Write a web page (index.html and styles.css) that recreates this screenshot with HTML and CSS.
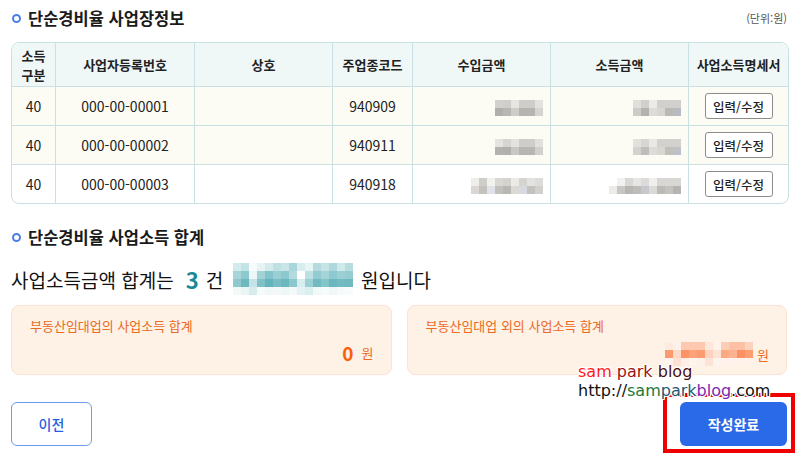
FILE: index.html
```html
<!DOCTYPE html>
<html lang="ko">
  <head>
    <meta charset="utf-8" />
    <title>단순경비율 사업장정보</title>
    <link rel="stylesheet" href="styles.css">
  </head>
  <body>
    <div class="page">
      <div class="section-head">
        <h2 class="section-title"><span class="dot"></span>단순경비율 사업장정보</h2>
        <span class="unit">(단위:원)</span>
      </div>

      <table class="biz-table">
        <colgroup>
          <col style="width:44px">
          <col style="width:139px">
          <col style="width:138px">
          <col style="width:80px">
          <col style="width:138px">
          <col style="width:138px">
          <col style="width:99px">
        </colgroup>
        <thead>
          <tr>
            <th>소득<br>구분</th>
            <th>사업자등록번호</th>
            <th>상호</th>
            <th>주업종코드</th>
            <th>수입금액</th>
            <th>소득금액</th>
            <th>사업소득명세서</th>
          </tr>
        </thead>
        <tbody>
          <tr class="cream">
            <td>40</td>
            <td>000-00-00001</td>
            <td></td>
            <td>940909</td>
            <td class="amount">
              <svg class="mosaic" width="48" height="16">
                <rect x="0" y="0" width="8" height="8" fill="#d3d1ce"/><rect x="8" y="0" width="8" height="8" fill="#d0cecb"/><rect x="16" y="0" width="8" height="8" fill="#e6e5e0"/><rect x="24" y="0" width="16" height="8" fill="#cfcdca"/><rect x="40" y="0" width="8" height="8" fill="#e3e2de"/>
                <rect x="0" y="8" width="8" height="8" fill="#b1afab"/><rect x="8" y="8" width="8" height="8" fill="#b8b7b4"/><rect x="16" y="8" width="8" height="8" fill="#cfcdc8"/><rect x="24" y="8" width="16" height="8" fill="#b6b4b0"/><rect x="40" y="8" width="8" height="8" fill="#d6d4d0"/>
              </svg>
            </td>
            <td class="amount">
              <svg class="mosaic" width="48" height="16">
                <rect x="0" y="0" width="8" height="8" fill="#e1dfdc"/><rect x="8" y="0" width="8" height="8" fill="#d2d0cd"/><rect x="16" y="0" width="8" height="8" fill="#ecebe7"/><rect x="24" y="0" width="24" height="8" fill="#d2d0cd"/>
                <rect x="0" y="8" width="8" height="8" fill="#cfccc8"/><rect x="8" y="8" width="8" height="8" fill="#b4b2ae"/><rect x="16" y="8" width="8" height="8" fill="#dcdcd9"/><rect x="24" y="8" width="8" height="8" fill="#d9d6d2"/><rect x="32" y="8" width="8" height="8" fill="#bcb9b4"/><rect x="40" y="8" width="8" height="8" fill="#b9bbc2"/>
              </svg>
            </td>
            <td><button type="button" class="edit-btn">입력/수정</button></td>
          </tr>
          <tr class="cream">
            <td>40</td>
            <td>000-00-00002</td>
            <td></td>
            <td>940911</td>
            <td class="amount">
              <svg class="mosaic" width="48" height="16">
                <rect x="0" y="0" width="8" height="8" fill="#e5e4e0"/><rect x="8" y="0" width="8" height="8" fill="#d7d5d2"/><rect x="16" y="0" width="8" height="8" fill="#e3e2de"/><rect x="24" y="0" width="16" height="8" fill="#cfcdca"/><rect x="40" y="0" width="8" height="8" fill="#e1e0dc"/>
                <rect x="0" y="8" width="8" height="8" fill="#b5b3af"/><rect x="8" y="8" width="8" height="8" fill="#b2b0ad"/><rect x="16" y="8" width="8" height="8" fill="#c9c7c3"/><rect x="24" y="8" width="16" height="8" fill="#b8b6b2"/><rect x="40" y="8" width="8" height="8" fill="#d2d0cc"/>
              </svg>
            </td>
            <td class="amount">
              <svg class="mosaic" width="48" height="16">
                <rect x="0" y="0" width="8" height="8" fill="#e3e1de"/><rect x="8" y="0" width="8" height="8" fill="#d9d6d2"/><rect x="16" y="0" width="8" height="8" fill="#e9e8e4"/><rect x="24" y="0" width="24" height="8" fill="#d3d1ce"/>
                <rect x="0" y="8" width="8" height="8" fill="#d5d2ce"/><rect x="8" y="8" width="8" height="8" fill="#c0beba"/><rect x="16" y="8" width="8" height="8" fill="#dedcd8"/><rect x="24" y="8" width="8" height="8" fill="#dad7d3"/><rect x="32" y="8" width="8" height="8" fill="#c1bfba"/><rect x="40" y="8" width="8" height="8" fill="#bfc1c8"/>
              </svg>
            </td>
            <td><button type="button" class="edit-btn">입력/수정</button></td>
          </tr>
          <tr>
            <td>40</td>
            <td>000-00-00003</td>
            <td></td>
            <td>940918</td>
            <td class="amount">
              <svg class="mosaic" width="72" height="16">
                <rect x="0" y="0" width="8" height="8" fill="#eeedea"/><rect x="8" y="0" width="8" height="8" fill="#cfcdca"/><rect x="16" y="0" width="8" height="8" fill="#f1f1ee"/><rect x="24" y="0" width="8" height="8" fill="#d9d7d4"/><rect x="32" y="0" width="8" height="8" fill="#d4d2cf"/><rect x="40" y="0" width="8" height="8" fill="#eceae7"/><rect x="48" y="0" width="8" height="8" fill="#d5d4d1"/><rect x="56" y="0" width="8" height="8" fill="#e3e3e2"/><rect x="64" y="0" width="8" height="8" fill="#dedcd9"/>
                <rect x="0" y="8" width="8" height="8" fill="#dad7d3"/><rect x="8" y="8" width="8" height="8" fill="#c4c2be"/><rect x="16" y="8" width="8" height="8" fill="#dfe3e8"/><rect x="24" y="8" width="8" height="8" fill="#c3c1bd"/><rect x="32" y="8" width="8" height="8" fill="#b9b7b3"/><rect x="40" y="8" width="8" height="8" fill="#dcd9d5"/><rect x="48" y="8" width="8" height="8" fill="#d6d9df"/><rect x="56" y="8" width="8" height="8" fill="#c3c2c0"/><rect x="64" y="8" width="8" height="8" fill="#d2d0cd"/>
              </svg>
            </td>
            <td class="amount">
              <svg class="mosaic" width="72" height="16">
                <rect x="0" y="0" width="8" height="8" fill="#ffffff"/><rect x="8" y="0" width="8" height="8" fill="#f2f1ef"/><rect x="16" y="0" width="8" height="8" fill="#dad8d5"/><rect x="24" y="0" width="8" height="8" fill="#e6e6e4"/><rect x="32" y="0" width="8" height="8" fill="#dcdbd9"/><rect x="40" y="0" width="8" height="8" fill="#f0efed"/><rect x="48" y="0" width="24" height="8" fill="#d9d7d4"/>
                <rect x="0" y="8" width="8" height="8" fill="#ecebe8"/><rect x="8" y="8" width="8" height="8" fill="#c9c7c4"/><rect x="16" y="8" width="8" height="8" fill="#b8b6b3"/><rect x="24" y="8" width="8" height="8" fill="#bebdbc"/><rect x="32" y="8" width="8" height="8" fill="#c6c8ce"/><rect x="40" y="8" width="8" height="8" fill="#dcdad7"/><rect x="48" y="8" width="8" height="8" fill="#bcbab6"/><rect x="56" y="8" width="8" height="8" fill="#c4c2be"/><rect x="64" y="8" width="8" height="8" fill="#b5b4b2"/>
              </svg>
            </td>
            <td><button type="button" class="edit-btn">입력/수정</button></td>
          </tr>
        </tbody>
      </table>

      <div class="section-head second">
        <h2 class="section-title"><span class="dot"></span>단순경비율 사업소득 합계</h2>
      </div>

      <p class="total-line">
        사업소득금액 합계는
        <strong class="count">3</strong>
        <span class="unit-word">건</span>
        <svg class="mosaic total-blur" width="120" height="32">
          <rect x="0" y="0" width="8" height="8" fill="#d2ebed"/><rect x="8" y="0" width="8" height="8" fill="#c3e3e6"/><rect x="16" y="0" width="8" height="8" fill="#f7fbfb"/><rect x="24" y="0" width="8" height="8" fill="#e6f3f4"/><rect x="32" y="0" width="8" height="8" fill="#d4ebed"/><rect x="40" y="0" width="8" height="8" fill="#bfe0e3"/><rect x="48" y="0" width="8" height="8" fill="#c8e5e7"/><rect x="56" y="0" width="8" height="8" fill="#a9d6da"/><rect x="64" y="0" width="8" height="8" fill="#d7edee"/><rect x="72" y="0" width="8" height="8" fill="#e8f5f5"/><rect x="80" y="0" width="8" height="8" fill="#b5dbde"/><rect x="88" y="0" width="8" height="8" fill="#c6e4e6"/><rect x="96" y="0" width="8" height="8" fill="#aed8dc"/><rect x="104" y="0" width="8" height="8" fill="#d0e9eb"/><rect x="112" y="0" width="8" height="8" fill="#b8dde0"/>
          <rect x="0" y="8" width="8" height="8" fill="#a9d5d9"/><rect x="8" y="8" width="8" height="8" fill="#8ccacf"/><rect x="16" y="8" width="8" height="8" fill="#eef7f7"/><rect x="24" y="8" width="8" height="8" fill="#a2d2d6"/><rect x="32" y="8" width="8" height="8" fill="#83c4ca"/><rect x="40" y="8" width="8" height="8" fill="#9acfd3"/><rect x="48" y="8" width="8" height="8" fill="#8cc9ce"/><rect x="56" y="8" width="8" height="8" fill="#b4dadd"/><rect x="64" y="8" width="8" height="8" fill="#ffffff"/><rect x="72" y="8" width="8" height="8" fill="#bde0e3"/><rect x="80" y="8" width="8" height="8" fill="#92cbd0"/><rect x="88" y="8" width="8" height="8" fill="#a5d3d7"/><rect x="96" y="8" width="8" height="8" fill="#8ec9cf"/><rect x="104" y="8" width="8" height="8" fill="#9ccfd4"/><rect x="112" y="8" width="8" height="8" fill="#96cdd2"/>
          <rect x="0" y="16" width="8" height="8" fill="#8fc9ce"/><rect x="8" y="16" width="8" height="8" fill="#6db9c0"/><rect x="16" y="16" width="8" height="8" fill="#c6e4e7"/><rect x="24" y="16" width="8" height="8" fill="#7fc1c7"/><rect x="32" y="16" width="8" height="8" fill="#64b4bb"/><rect x="40" y="16" width="8" height="8" fill="#78bec4"/><rect x="48" y="16" width="8" height="8" fill="#6bb8bf"/><rect x="56" y="16" width="8" height="8" fill="#8ac8cd"/><rect x="64" y="16" width="8" height="8" fill="#d8eded"/><rect x="72" y="16" width="8" height="8" fill="#9bd0d4"/><rect x="80" y="16" width="8" height="8" fill="#70bac1"/><rect x="88" y="16" width="8" height="8" fill="#84c5ca"/><rect x="96" y="16" width="8" height="8" fill="#6ab7be"/><rect x="104" y="16" width="8" height="8" fill="#73bbc2"/><rect x="112" y="16" width="8" height="8" fill="#6fb9c0"/>
          <rect x="0" y="24" width="8" height="8" fill="#f1f9f9"/><rect x="8" y="24" width="8" height="8" fill="#eaf5f6"/><rect x="16" y="24" width="8" height="8" fill="#d8eced"/><rect x="24" y="24" width="8" height="8" fill="#f5fafa"/><rect x="32" y="24" width="8" height="8" fill="#f0f8f8"/><rect x="40" y="24" width="8" height="8" fill="#f3f9f9"/><rect x="48" y="24" width="8" height="8" fill="#eef7f7"/><rect x="56" y="24" width="8" height="8" fill="#f4fafa"/><rect x="64" y="24" width="8" height="8" fill="#e4f2f3"/><rect x="72" y="24" width="8" height="8" fill="#d9eeef"/><rect x="80" y="24" width="8" height="8" fill="#f2f9f9"/><rect x="88" y="24" width="8" height="8" fill="#f6fbfb"/><rect x="96" y="24" width="8" height="8" fill="#eff7f8"/><rect x="104" y="24" width="8" height="8" fill="#f5fafa"/><rect x="112" y="24" width="8" height="8" fill="#f8fcfc"/>
        </svg>
        <span class="tail">원입니다</span>
      </p>

      <div class="sum-boxes">
        <div class="sum-box">
          <div class="sum-label">부동산임대업의 사업소득 합계</div>
          <div class="sum-value"><strong>0</strong><span class="won">원</span></div>
        </div>
        <div class="sum-box">
          <div class="sum-label">부동산임대업 외의 사업소득 합계</div>
          <div class="sum-value">
            <svg class="mosaic" width="88" height="24">
              <rect x="0" y="0" width="8" height="8" fill="#fde9df"/><rect x="8" y="0" width="8" height="8" fill="#fef1ea"/><rect x="16" y="0" width="24" height="8" fill="#fdc8b0"/><rect x="40" y="0" width="8" height="8" fill="#fee6da"/><rect x="48" y="0" width="8" height="8" fill="#fef2eb"/><rect x="56" y="0" width="8" height="8" fill="#fdcdb6"/><rect x="64" y="0" width="16" height="8" fill="#fcc0a5"/><rect x="80" y="0" width="8" height="8" fill="#fdd2bd"/>
              <rect x="0" y="8" width="8" height="8" fill="#fb9a6d"/><rect x="8" y="8" width="8" height="8" fill="#fdd9c8"/><rect x="16" y="8" width="8" height="8" fill="#fb9364"/><rect x="24" y="8" width="8" height="8" fill="#fca37b"/><rect x="32" y="8" width="8" height="8" fill="#fb9c70"/><rect x="40" y="8" width="8" height="8" fill="#fdd3bf"/><rect x="48" y="8" width="8" height="8" fill="#fde4d6"/><rect x="56" y="8" width="8" height="8" fill="#fca882"/><rect x="64" y="8" width="8" height="8" fill="#fcb190"/><rect x="72" y="8" width="8" height="8" fill="#fb9162"/><rect x="80" y="8" width="8" height="8" fill="#fb9e72"/>
              <rect x="0" y="16" width="8" height="8" fill="#fef3ed"/><rect x="8" y="16" width="8" height="8" fill="#fde1d3"/><rect x="16" y="16" width="8" height="8" fill="#fef0e8"/><rect x="24" y="16" width="8" height="8" fill="#fef4ee"/><rect x="32" y="16" width="8" height="8" fill="#fef1e9"/><rect x="40" y="16" width="8" height="8" fill="#fde3d5"/><rect x="48" y="16" width="8" height="8" fill="#fef4ee"/><rect x="56" y="16" width="32" height="8" fill="#fef2eb"/>
            </svg>
            <span class="won">원</span>
          </div>
        </div>
      </div>

      <div class="actions">
        <button type="button" class="btn-prev">이전</button>
        <button type="button" class="btn-done">작성완료</button>
      </div>
    </div>

    <!-- blog watermark and highlight frame over the bottom right -->
    <div class="watermark">
      <div class="wm-name"><span class="c1">sam</span> <span class="c2">park</span> <span class="c3">blog</span></div>
      <div class="wm-url">http://<span class="g1">sam</span><span class="g2">park</span><span class="g3">blog</span>.com</div>
    </div>
    <div class="highlight"></div>
  </body>
</html>
```

FILE: styles.css
```css
body {
  margin: 0;
  background: #fff;
  font-family: "Noto Sans CJK KR", "Noto Sans", sans-serif;
  color: #222;
}

.page {
  width: 776px;
  padding: 0 13px 0 11px;
}

.section-head {
  display: flex;
  align-items: center;
  justify-content: space-between;
  height: 24px;
  margin-top: 6px;
}

.section-head.second {
  margin-top: 21px;
}

.section-title {
  display: flex;
  align-items: center;
  margin: 0;
  font-size: 16.5px;
  font-weight: 700;
  color: #1a1a1a;
}

.dot {
  width: 5px;
  height: 5px;
  border: 2px solid #4a7fe8;
  border-radius: 50%;
  margin: 0 7px 0 1px;
}

.unit {
  font-size: 11px;
  color: #555;
}

/* business table */
.biz-table {
  width: 776px;
  margin-top: 12px;
  border-collapse: separate;
  border-spacing: 0;
  table-layout: fixed;
  border: 1px solid #c9e1e2;
  border-radius: 8px;
  overflow: hidden;
  font-size: 14px;
}

.biz-table th,
.biz-table td {
  border-right: 1px solid #c9e1e2;
  border-bottom: 1px solid #c9e1e2;
  text-align: center;
  padding: 0;
}

.biz-table th:last-child,
.biz-table td:last-child {
  border-right: none;
}

.biz-table tbody tr:last-child td {
  border-bottom: none;
}

.biz-table th {
  height: 43px;
  background: #eff7f7;
  font-size: 13px;
  font-weight: 700;
  line-height: 19px;
  color: #222;
}

.biz-table td {
  height: 38px;
  color: #222;
}

.biz-table tr.cream td {
  background: #fcfcf4;
}

.biz-table td.amount {
  text-align: right;
  padding-right: 7px;
}

.mosaic {
  display: inline-block;
  vertical-align: middle;
}

.edit-btn {
  font-family: inherit;
  font-size: 12.5px;
  font-weight: 500;
  color: #222;
  background: #fff;
  border: 1px solid #8c8c8c;
  border-radius: 3px;
  width: 68px;
  height: 26px;
  padding: 0;
  cursor: pointer;
}

/* total line */
.total-line {
  display: flex;
  align-items: center;
  margin: 10px 0 0;
  height: 40px;
  font-size: 19px;
  color: #111;
}

.count {
  color: #1b8896;
  font-size: 22px;
  font-weight: 700;
  margin: 0 7px 0 12px;
}

.unit-word {
  margin-right: 10px;
}

.total-blur {
  margin-right: 8px;
}

/* orange summary boxes */
.sum-boxes {
  display: flex;
  gap: 15px;
  margin-top: 6px;
}

.sum-box {
  flex: 1;
  height: 70px;
  background: #fef1e6;
  border: 1px solid #fbe4d2;
  border-radius: 8px;
  display: flex;
  flex-direction: column;
  justify-content: space-between;
  padding: 10px 17px 8px 18px;
  box-sizing: border-box;
}

.sum-label {
  font-size: 13px;
  color: #ea6a1f;
}

.sum-value {
  display: flex;
  align-items: center;
  justify-content: flex-end;
  color: #ea6a1f;
}

.sum-value strong {
  font-size: 19px;
  font-weight: 700;
  color: #fb5e0c;
  margin-right: 4px;
}

.won {
  font-size: 13px;
  margin-left: 4px;
}

/* bottom buttons */
.actions {
  display: flex;
  justify-content: space-between;
  margin-top: 27px;
}

.btn-prev,
.btn-done {
  font-family: inherit;
  font-size: 14px;
  font-weight: 500;
  height: 44px;
  border-radius: 6px;
  cursor: pointer;
}

.btn-prev {
  width: 81px;
  background: #fff;
  color: #2260e4;
  border: 1.5px solid #6b9cf3;
}

.btn-done {
  width: 107px;
  background: #2a6ae8;
  color: #fff;
  border: none;
  font-weight: 700;
}

/* watermark */
.watermark {
  position: absolute;
  left: 578px;
  top: 362px;
  font-family: "DejaVu Sans", sans-serif;
  font-size: 16px;
  line-height: 19px;
  z-index: 2;
  text-shadow: 1px 0 #fff, -1px 0 #fff, 0 1px #fff, 0 -1px #fff, 1px 1px #fff, -1px -1px #fff, 1px -1px #fff, -1px 1px #fff;
}

.wm-name .c1 { color: #ff1a1a; }
.wm-name .c2 { color: #9c1414; }
.wm-name .c3 { color: #4a0d0d; }
.wm-url { color: #111; }
.wm-url .g1 { color: #1b7a3a; }
.wm-url .g2 { color: #1a5a78; }
.wm-url .g3 { color: #7a2ab0; }

.highlight {
  position: absolute;
  left: 663px;
  top: 393px;
  width: 124px;
  height: 52px;
  border: 4px solid #ee0000;
  z-index: 1;
}
```
